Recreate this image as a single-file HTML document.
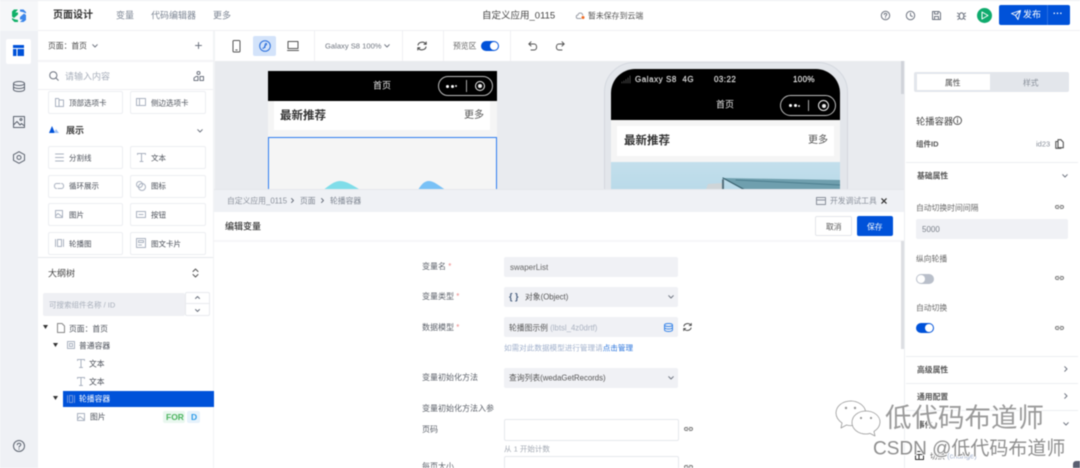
<!DOCTYPE html>
<html lang="zh"><head><meta charset="utf-8"><title>页面设计</title>
<style>
html,body{margin:0;padding:0;width:1080px;height:468px;overflow:hidden;background:#fff}
#r{position:relative;width:1080px;height:468px;overflow:hidden;background:#fff;font-family:"Liberation Sans","Noto Sans CJK SC",sans-serif;font-size:9px;color:#4a4f58;filter:blur(.45px)}
.t{position:absolute;white-space:nowrap;transform:translateY(calc(-50% + 1px));line-height:1.2}
.b{position:absolute;box-sizing:border-box}
svg{position:absolute;overflow:visible;fill:none;stroke-linecap:round;stroke-linejoin:round}
.card{position:absolute;box-sizing:border-box;width:75px;height:23px;border:1px solid #eceef2;border-radius:2px;background:#fff}
.g{color:#7d8694}
.lab{color:#5b6069;font-size:8px}
.sel{position:absolute;box-sizing:border-box;left:504px;width:174px;height:20px;background:#f0f1f5;border-radius:2px}
.s1{stroke:#6e7480;stroke-width:1}
.s2{stroke:#aab2c0;stroke-width:1}
</style></head><body><div id="r">

<!-- top bar -->
<div class="b" style="left:0;top:0;width:1080px;height:1px;background:#eceef1"></div>
<div class="b" style="left:38px;top:30px;width:1042px;height:1px;background:#eff0f3"></div>

<!-- left rail -->
<div class="b" style="left:0;top:1px;width:38px;height:467px;background:#eff1f5"></div>
<div class="b" style="left:0;top:1px;width:38px;height:30px;background:#f6f7f9"></div>
<svg style="left:11px;top:9px" width="16" height="14" viewBox="0 0 16 14"><path d="M7 .5H3L1 2.500v5l2 1.500 4-3.500V3.500H4.500L3.500 4.500M1 9l2 1 1.500.5 2.500.5V13H3.500L1 10.500z" fill="#10b068"/><path d="M9 13h3.500L15 11V6l-2-1.500-4 3.500v2.500h2.500l1-1M15 4.500l-2-1-1.500-.5L9 2.500V.5h3.500L15 3z" fill="#3b86ea"/></svg>
<div class="b" style="left:6px;top:39px;width:25px;height:25px;background:#fff;border-radius:2px"></div>
<svg style="left:13px;top:45px" width="11" height="11" viewBox="0 0 11 11"><path d="M0 0h11v3H0zM0 4h3.500v7H0zM4.500 4H11v7H4.500z" fill="#0052d9"/></svg>
<svg style="left:13px;top:81px" width="12" height="11" viewBox="0 0 12 11" stroke="#5d6470"><ellipse cx="6" cy="2.500" rx="5.500" ry="2"/><path d="M.5 2.500v6c0 1.100 2.500 2 5.500 2s5.500-.9 5.500-2v-6M.5 5.500c0 1.100 2.500 2 5.500 2s5.500-.9 5.500-2"/></svg>
<svg style="left:13px;top:116px" width="12" height="12" viewBox="0 0 12 12" stroke="#5d6470"><rect x=".5" y=".5" width="11" height="11"/><circle cx="8" cy="3.500" r="1"/><path d="M.5 9L4 5.500l3 3.500 1.500-1.500 3 2.500"/></svg>
<svg style="left:13px;top:151px" width="12" height="13" viewBox="0 0 12 13" stroke="#5d6470"><path d="M6 .7l5.500 3v5.600L6 12.300.5 9.300V3.700z"/><circle cx="6" cy="6.500" r="2"/></svg>
<svg style="left:13px;top:440px" width="12" height="12" viewBox="0 0 12 12" stroke="#5d6470"><circle cx="6" cy="6" r="5.500"/><path d="M4.300 4.700C4.300 2.800 7.800 2.800 7.800 4.700 7.800 6 6 5.900 6 7.300M6 8.900v.3"/></svg>

<!-- top bar text -->
<span class="t" style="left:53px;top:15px;font-size:10px;font-weight:700;color:#333">页面设计</span>
<span class="t g" style="left:116px;top:15px">变量</span>
<span class="t g" style="left:151px;top:15px">代码编辑器</span>
<span class="t g" style="left:213px;top:15px">更多</span>
<span class="t" style="left:482px;top:15px;color:#444;font-size:9.500px">自定义应用_0115</span>
<svg style="left:576px;top:12px" width="9" height="7" viewBox="0 0 9 7"><path d="M2 6.500C-.3 6.500-.3 3 2 3 2.500.5 6 .3 6.700 3" stroke="#9a9fa8"/><path d="M2 6.500h3" stroke="#9a9fa8"/><circle cx="7" cy="5.500" r="1.500" fill="#f06a22"/></svg>
<span class="t" style="left:588px;top:15px;font-size:7.900px;color:#555">暂未保存到云端</span>

<svg style="left:881px;top:11px" width="9" height="9" viewBox="0 0 9 9" class="s1"><circle cx="4.500" cy="4.500" r="4.200"/><path d="M3.200 3.500c0-1.500 2.600-1.500 2.600 0 0 1-1.300 1-1.300 2M4.500 6.800v.1"/></svg>
<svg style="left:906px;top:11px" width="9" height="9" viewBox="0 0 9 9" class="s1"><circle cx="4.500" cy="4.500" r="4.200"/><path d="M4.500 2.200v2.500l1.800.8"/></svg>
<svg style="left:932px;top:11px" width="9" height="9" viewBox="0 0 9 9" class="s1"><path d="M.5.500h6.500l1.500 1.500v6.500h-8zM2.500.5v2.500h3.500V.5M2.500 8.500V5.500h4v3"/></svg>
<svg style="left:957px;top:11px" width="9" height="9" viewBox="0 0 9 9" class="s1"><ellipse cx="4.500" cy="5" rx="2.300" ry="3.300"/><path d="M.5 2l2 1.500M8.500 2l-2 1.500M.3 5.300h1.900M8.700 5.300H6.800M.8 8.500l1.800-1.500M8.200 8.500L6.400 7"/></svg>
<div class="b" style="left:977px;top:8px;width:15px;height:15px;border-radius:50%;background:#0fab6d"></div>
<svg style="left:981px;top:11px" width="8" height="9" viewBox="0 0 8 9"><path d="M1 1l6 3.500L1 8z" stroke="#fff"/></svg>
<div class="b" style="left:999px;top:5px;width:71px;height:20px;border-radius:2px;background:#0052d9"></div>
<div class="b" style="left:1047px;top:5px;width:1px;height:20px;background:#2b6fe0"></div>
<svg style="left:1011px;top:10px" width="10" height="10" viewBox="0 0 10 10"><path d="M.5 3.500L9.500.5 7 9.500 4.500 5.500zM4.500 5.500L9.500.5" stroke="#fff" stroke-width=".9"/></svg>
<span class="t" style="left:1023px;top:14px;color:#fff;font-size:9px">发布</span>
<span class="t" style="left:1053px;top:13px;color:#fff;font-size:9px;font-weight:700;letter-spacing:.3px">···</span>

<!-- left panel -->
<div class="b" style="left:213px;top:31px;width:2px;height:437px;background:#f2f3f5"></div>
<span class="t" style="left:48px;top:44.500px;font-size:7.800px;color:#444">页面：首页</span>
<svg style="left:92px;top:44px" width="6" height="4" viewBox="0 0 6 4" class="s1"><path d="M.7.700L3 3 5.300.7"/></svg>
<svg style="left:195px;top:42px" width="7" height="7" viewBox="0 0 7 7" class="s1"><path d="M3.500.5v6M.5 3.500h6"/></svg>
<div class="b" style="left:38px;top:60px;width:175px;height:2px;background:#f3f4f6"></div>
<svg style="left:49px;top:71px" width="10" height="10" viewBox="0 0 10 10" class="s1"><circle cx="4.300" cy="4.300" r="3.600"/><path d="M7 7l2.300 2.300"/></svg>
<span class="t" style="left:65px;top:75.500px;color:#a7aeba;font-size:9px">请输入内容</span>
<svg style="left:193px;top:71px" width="11" height="10" viewBox="0 0 11 10" class="s1"><circle cx="5.500" cy="2" r="1.500"/><path d="M1 9.500V7l2-1.500h2V9.500zM7 5.500h3.500v4H7z"/></svg>
<div class="b" style="left:38px;top:89px;width:175px;height:1px;background:#eff0f3"></div>

<div class="card" style="left:48px;top:91px"></div><div class="card" style="left:130px;top:91px;width:76px"></div>
<svg style="left:55px;top:98px" width="9" height="9" viewBox="0 0 9 9" class="s2"><path d="M.5.500h3l1 1.500h4v6.500h-8zM4 2v6.500"/></svg>
<span class="t" style="left:69px;top:102px;font-size:7.500px">顶部选项卡</span>
<svg style="left:136px;top:98px" width="10" height="8" viewBox="0 0 10 8" class="s2"><rect x=".5" y=".5" width="9" height="7"/><path d="M3.500.5v7"/></svg>
<span class="t" style="left:151px;top:102px;font-size:7.500px">侧边选项卡</span>

<svg style="left:49px;top:126px" width="10" height="8" viewBox="0 0 10 8"><path d="M3 0l3 7H0z" fill="#0052d9"/><path d="M7 3l3 4H5z" fill="#9cc0f5"/></svg>
<span class="t" style="left:66px;top:130px;font-size:9px;font-weight:700;color:#444">展示</span>
<svg style="left:197px;top:129px" width="6" height="4" viewBox="0 0 6 4" class="s1"><path d="M.7.700L3 3 5.300.7"/></svg>

<div class="card" style="left:48px;top:146px"></div><div class="card" style="left:130px;top:146px;width:76px"></div>
<svg style="left:55px;top:153px" width="9" height="9" viewBox="0 0 9 9" class="s2"><path d="M.5 1h8M.5 4.500h8M.5 8h8"/></svg>
<span class="t" style="left:69px;top:157px;font-size:7.500px">分割线</span>
<svg style="left:137px;top:153px" width="9" height="9" viewBox="0 0 9 9" class="s2"><path d="M.5 1.500V.5h8v1M4.500.5v8M3 8.500h3"/></svg>
<span class="t" style="left:151px;top:157px;font-size:7.500px">文本</span>

<div class="card" style="left:48px;top:175px"></div><div class="card" style="left:130px;top:175px;width:76px"></div>
<svg style="left:54px;top:182px" width="10" height="8" viewBox="0 0 10 8" class="s2"><path d="M2.500 6.500C-.3 6.500-.3 1.500 2.500 1.500H6M7.500 1.500c2.800 0 2.800 5 0 5H4"/></svg>
<span class="t" style="left:69px;top:185px;font-size:7.500px">循环展示</span>
<svg style="left:136px;top:181px" width="10" height="10" viewBox="0 0 10 10" class="s2"><circle cx="3.500" cy="3.500" r="3"/><circle cx="6" cy="6" r="3.500"/></svg>
<span class="t" style="left:151px;top:185px;font-size:7.500px">图标</span>

<div class="card" style="left:48px;top:203px"></div><div class="card" style="left:130px;top:203px;width:76px"></div>
<svg style="left:55px;top:210px" width="8" height="8" viewBox="0 0 8 8" class="s2"><rect x=".5" y=".5" width="7" height="7"/><path d="M.5 6l2.500-2.500L7.500 7"/></svg>
<span class="t" style="left:69px;top:214px;font-size:7.500px">图片</span>
<svg style="left:136px;top:211px" width="10" height="7" viewBox="0 0 10 7" class="s2"><rect x=".5" y=".5" width="9" height="6"/><path d="M3 3.500h4"/></svg>
<span class="t" style="left:151px;top:214px;font-size:7.500px">按钮</span>

<div class="card" style="left:48px;top:232px"></div><div class="card" style="left:130px;top:232px;width:76px"></div>
<svg style="left:55px;top:239px" width="9" height="8" viewBox="0 0 9 8" class="s2"><path d="M.5.500v7M8.500.5v7M2.500.5h4v7h-4z"/></svg>
<span class="t" style="left:69px;top:242.500px;font-size:7.500px">轮播图</span>
<svg style="left:136px;top:238px" width="10" height="10" viewBox="0 0 10 10" class="s2"><rect x=".5" y=".5" width="9" height="9"/><path d="M2.500 2.500h5v2h-5zM2.500 7h3"/></svg>
<span class="t" style="left:151px;top:242.500px;font-size:7.500px">图文卡片</span>

<div class="b" style="left:38px;top:257px;width:175px;height:1px;background:#e6e8ec"></div>
<span class="t" style="left:48px;top:272.500px;font-size:9px;color:#444">大纲树</span>
<svg style="left:192px;top:268px" width="7" height="10" viewBox="0 0 7 10" stroke="#555"><path d="M1 3.500L3.500 1 6 3.500M1 6.500L3.500 9 6 6.500"/></svg>

<div class="b" style="left:43px;top:293px;width:142px;height:23px;background:#eff0f4;border-radius:2px"></div>
<span class="t" style="left:49px;top:303.500px;font-size:7.500px;color:#a7aeba">可搜索组件名称 / ID</span>
<div class="b" style="left:185px;top:292px;width:25px;height:24px;border:1px solid #e8eaee;border-radius:2px;background:#fff"></div>
<div class="b" style="left:185px;top:303px;width:25px;height:1px;background:#e8eaee"></div>
<svg style="left:195px;top:296px" width="5" height="3" viewBox="0 0 5 3" class="s1"><path d="M.5 2.500L2.500.5l2 2"/></svg>
<svg style="left:195px;top:309px" width="5" height="3" viewBox="0 0 5 3" class="s1"><path d="M.5.5l2 2 2-2"/></svg>

<!-- tree -->
<svg style="left:43px;top:325px" width="5" height="4" viewBox="0 0 5 4"><path d="M0 0h5L2.500 4z" fill="#333"/></svg>
<svg style="left:57px;top:323px" width="8" height="10" viewBox="0 0 8 10" stroke="#888"><path d="M.5.500h4.500l2.500 2.500v6.500h-7z"/></svg>
<span class="t" style="left:69px;top:327.500px;font-size:7.800px">页面：首页</span>
<svg style="left:53px;top:343px" width="5" height="4" viewBox="0 0 5 4"><path d="M0 0h5L2.500 4z" fill="#333"/></svg>
<svg style="left:67px;top:341px" width="8" height="8" viewBox="0 0 8 8" class="s2"><rect x=".5" y=".5" width="7" height="7"/><rect x="2.500" y="2.500" width="3" height="3"/></svg>
<span class="t" style="left:79px;top:344.500px;font-size:7.800px">普通容器</span>
<svg style="left:77px;top:359px" width="8" height="9" viewBox="0 0 8 9" class="s2"><path d="M.5 1.500V.5h7v1M4 .5v8M2.500 8.500h3"/></svg>
<span class="t" style="left:89px;top:362.500px;font-size:7.800px">文本</span>
<svg style="left:77px;top:377px" width="8" height="9" viewBox="0 0 8 9" class="s2"><path d="M.5 1.500V.5h7v1M4 .5v8M2.500 8.500h3"/></svg>
<span class="t" style="left:89px;top:380.500px;font-size:7.800px">文本</span>
<svg style="left:53px;top:396px" width="5" height="4" viewBox="0 0 5 4"><path d="M0 0h5L2.500 4z" fill="#333"/></svg>
<div class="b" style="left:63px;top:391px;width:151px;height:16px;background:#0052d9"></div>
<svg style="left:67px;top:395px" width="8" height="8" viewBox="0 0 8 8" stroke="#6f96e0"><path d="M.5.500v7M7.500.5v7M2.500.5h3v7h-3z"/></svg>
<span class="t" style="left:79px;top:398px;font-size:7.800px;color:#fff">轮播容器</span>
<svg style="left:77px;top:413px" width="8" height="8" viewBox="0 0 8 8" class="s2"><rect x=".5" y=".5" width="7" height="7"/><path d="M.5 6l2.500-2.500L7.500 7"/></svg>
<span class="t" style="left:90px;top:416px;font-size:7.800px">图片</span>
<div class="b" style="left:163px;top:411px;width:22px;height:12px;border-radius:2px;background:#e9f7ef"></div>
<span class="t" style="left:166px;top:416px;font-size:8.500px;font-weight:700;color:#4cb45f">FOR</span>
<div class="b" style="left:187px;top:411px;width:13px;height:12px;border-radius:2px;background:#e6f2fb"></div>
<span class="t" style="left:191px;top:416px;font-size:8.500px;font-weight:700;color:#2c9be8">D</span>

<!-- toolbar -->
<svg style="left:232px;top:40px" width="10" height="13" viewBox="0 0 10 13" stroke="#555"><rect x="1" y=".5" width="7" height="11.500" rx="1"/><path d="M3.800 10h1.400"/></svg>
<div class="b" style="left:253px;top:36px;width:23px;height:20px;background:#d3e3fa;border-radius:2px"></div>
<svg style="left:259px;top:40px" width="12" height="12" viewBox="0 0 12 12" stroke="#2a6fdc"><circle cx="6" cy="6" r="5.300"/><path d="M6.500 3.500C8 2.800 7.900 5 6.500 5.300 5.300 5.600 5.700 8.700 3.800 8.300M6 4.500v3"/></svg>
<svg style="left:287px;top:41px" width="12" height="10" viewBox="0 0 12 10" stroke="#555"><rect x="1" y=".5" width="10" height="7"/><path d="M.5 9.500h11"/></svg>
<div class="b" style="left:314px;top:31px;width:1px;height:30px;background:#eff0f3"></div>
<span class="t" style="left:325px;top:45px;font-size:7.600px;color:#707680">Galaxy S8 100%</span>
<svg style="left:384px;top:44px" width="6" height="4" viewBox="0 0 6 4" class="s1"><path d="M.7.700L3 3 5.300.7"/></svg>
<div class="b" style="left:402px;top:31px;width:1px;height:30px;background:#eff0f3"></div>
<svg style="left:417px;top:41px" width="10" height="10" viewBox="0 0 10 10" stroke="#444"><path d="M1 4C1.700 1 7 0 8.700 3M9 6c-.7 3-6 4-7.700 1"/><path d="M7 3.300h2.200V1M3 6.700H.8V9"/></svg>
<div class="b" style="left:443px;top:31px;width:1px;height:30px;background:#eff0f3"></div>
<span class="t" style="left:453px;top:45px;font-size:7.800px;color:#666">预览区</span>
<div class="b" style="left:481px;top:41px;width:18px;height:10px;border-radius:5px;background:#0052d9"></div>
<div class="b" style="left:490px;top:42px;width:8px;height:8px;border-radius:50%;background:#fff"></div>
<div class="b" style="left:510px;top:31px;width:1px;height:30px;background:#eff0f3"></div>
<svg style="left:528px;top:41px" width="10" height="10" viewBox="0 0 10 10" stroke="#555"><path d="M3 .8L.8 3 3 5M1 3h5c3.500 0 3.500 6 0 6H3"/></svg>
<svg style="left:555px;top:41px" width="10" height="10" viewBox="0 0 10 10" stroke="#555"><path d="M7 .8L9.200 3 7 5M9 3H4C.5 3 .5 9 4 9h3"/></svg>

<!-- canvas -->
<div class="b" style="left:215px;top:61px;width:689px;height:129px;background:#e9ebef"></div>

<!-- left phone -->
<div class="b" style="left:268px;top:71px;width:229px;height:120px;background:#f5f5f5"></div>
<div class="b" style="left:268px;top:71px;width:229px;height:30px;background:#000"></div>
<span class="t" style="left:373px;top:85px;font-size:9px;color:#e8e8e8">首页</span>
<div class="b" style="left:438px;top:76px;width:55px;height:20px;border:1px solid #bdbdbd;border-radius:10px"></div>
<span class="b" style="left:446px;top:84.500px;width:3px;height:3px;border-radius:50%;background:#fff"></span>
<span class="b" style="left:451px;top:84.500px;width:3px;height:3px;border-radius:50%;background:#fff"></span>
<span class="b" style="left:455px;top:85px;width:2px;height:2px;border-radius:50%;background:#ddd"></span>
<div class="b" style="left:466px;top:80px;width:1px;height:12px;background:#aaa"></div>
<div class="b" style="left:475px;top:81px;width:10px;height:10px;border:1px solid #eee;border-radius:50%"></div>
<div class="b" style="left:478px;top:84px;width:4px;height:4px;border-radius:50%;background:#eee"></div>
<div class="b" style="left:274px;top:101px;width:216px;height:29px;background:#fff"></div>
<span class="t" style="left:280px;top:116px;font-size:11.500px;font-weight:700;color:#333">最新推荐</span>
<span class="t" style="left:464px;top:114.500px;font-size:10px;color:#555">更多</span>
<div class="b" style="left:268px;top:137px;width:229px;height:60px;border:1.500px solid #2c7cf0;background:#f5f5f5"></div>
<svg style="left:269px;top:175px" width="228" height="15" viewBox="0 0 228 15"><path d="M54 15C60 11 65 6 71 6 78 6 84 11 92 15z" fill="#7fdde9"/><path d="M149 15C152 10 155 6 160 6 165 6 170 11 177 15z" fill="#79c1f6"/></svg>

<!-- right phone -->
<div class="b" style="left:604px;top:62px;width:244px;height:140px;background:#e3e6eb;border:1px solid #d4d8df;border-radius:30px 30px 0 0"></div>
<div class="b" style="left:611px;top:69px;width:229px;height:130px;background:#f5f5f5;border-radius:24px 24px 0 0;overflow:hidden">
  <div class="b" style="left:0;top:0;width:229px;height:51px;background:#000"></div>
  <div class="b" style="left:6px;top:57px;width:217px;height:30px;background:#fff"></div>
  <div class="b" style="left:0;top:93px;width:229px;height:40px;background:linear-gradient(#c3dfec,#b5d8e8)"></div>
  <svg style="left:0;top:93px" width="229" height="30" viewBox="0 0 229 30"><path d="M94 30L97 22 112 21V30z" fill="#cfd5d8"/><path d="M112 16L229 18V27L185 29 134 28z" fill="#6f9fae"/><path d="M112 16L134 28H229" stroke="#38606e" stroke-width="1.200"/><path d="M125 18L229 23" stroke="#4d7f8f"/><path d="M112 18V28" stroke="#55707c" stroke-width="2"/></svg>
</div>
<svg style="left:621px;top:75px" width="10" height="8" viewBox="0 0 10 8"><path d="M1 7v1M3 6v2M5 4.500V8M7 3v5M9 1v7" stroke="#444"/></svg>
<span class="t" style="left:635px;top:78.500px;font-size:8px;color:#e4e4e4;letter-spacing:.55px;-webkit-text-stroke:.15px #e4e4e4">Galaxy S8&nbsp; 4G</span>
<span class="t" style="left:714px;top:78.500px;font-size:8px;color:#e4e4e4;letter-spacing:.45px;-webkit-text-stroke:.15px #e4e4e4">03:22</span>
<span class="t" style="left:793px;top:78.500px;font-size:8px;color:#eee;letter-spacing:.35px;-webkit-text-stroke:.15px #eee">100%</span>
<span class="t" style="left:716px;top:104px;font-size:9px;color:#e8e8e8">首页</span>
<div class="b" style="left:780px;top:95px;width:56px;height:21px;border:1px solid #bdbdbd;border-radius:11px"></div>
<span class="b" style="left:789px;top:104px;width:3px;height:3px;border-radius:50%;background:#fff"></span>
<span class="b" style="left:794px;top:104px;width:3px;height:3px;border-radius:50%;background:#fff"></span>
<span class="b" style="left:798px;top:104.500px;width:2px;height:2px;border-radius:50%;background:#ddd"></span>
<div class="b" style="left:808px;top:100px;width:1px;height:11px;background:#aaa"></div>
<div class="b" style="left:818px;top:100px;width:11px;height:11px;border:1px solid #eee;border-radius:50%"></div>
<div class="b" style="left:821.500px;top:103.500px;width:4px;height:4px;border-radius:50%;background:#eee"></div>
<span class="t" style="left:624px;top:141px;font-size:11.500px;font-weight:700;color:#333">最新推荐</span>
<span class="t" style="left:808px;top:139.500px;font-size:10px;color:#555">更多</span>

<!-- bottom panel -->
<div class="b" style="left:214px;top:189px;width:690px;height:23px;background:#eff1f5;border-top:1px solid #e6e8ec"></div>
<div class="b" style="left:214px;top:212px;width:690px;height:256px;background:#fff"></div>
<div class="b" style="left:214px;top:240px;width:690px;height:2px;background:#f6f6f8"></div>
<span class="t" style="left:227px;top:199.500px;font-size:7.800px;color:#8a909b">自定义应用_0115</span>
<svg style="left:291px;top:198px" width="3" height="5" viewBox="0 0 3 5" class="s1"><path d="M.5.500l2 2-2 2"/></svg>
<span class="t" style="left:300px;top:199.500px;font-size:7.800px;color:#7d8490">页面</span>
<svg style="left:321px;top:198px" width="3" height="5" viewBox="0 0 3 5" class="s1"><path d="M.5.500l2 2-2 2"/></svg>
<span class="t" style="left:330px;top:199.500px;font-size:7.800px;color:#7d8490">轮播容器</span>
<svg style="left:816px;top:197px" width="10" height="8" viewBox="0 0 10 8" stroke="#8a909b"><rect x=".5" y=".5" width="9" height="7"/><path d="M.5 3h9"/></svg>
<span class="t" style="left:830px;top:199.500px;font-size:7.800px;color:#8a909b">开发调试工具</span>
<svg style="left:881px;top:198px" width="6" height="6" viewBox="0 0 6 6" stroke="#333" stroke-width="1.200"><path d="M.8.800l4.400 4.400M5.200.8L.8 5.200"/></svg>

<span class="t" style="left:225px;top:225.500px;font-size:9px;color:#333;font-weight:500">编辑变量</span>
<div class="b" style="left:815px;top:216px;width:37px;height:20px;border:1px solid #e4e6ea;border-radius:2px;background:#fff"></div>
<span class="t" style="left:826px;top:225.500px;font-size:7.800px;color:#555">取消</span>
<div class="b" style="left:857px;top:216px;width:36px;height:20px;border-radius:2px;background:#0052d9"></div>
<span class="t" style="left:867px;top:225.500px;font-size:7.800px;color:#fff">保存</span>

<!-- form -->
<span class="t lab" style="left:422px;top:265.500px">变量名 <span style="color:#e88">*</span></span>
<div class="sel" style="top:257px"></div>
<span class="t" style="left:510px;top:266.500px;font-size:8px;color:#666">swaperList</span>
<span class="t lab" style="left:422px;top:296px">变量类型 <span style="color:#e88">*</span></span>
<div class="sel" style="top:287px"></div>
<span class="t" style="left:509px;top:295.500px;font-size:9px;font-weight:700;color:#4a6080">{ }</span>
<span class="t" style="left:525px;top:296px;font-size:7.800px;color:#555">对象(Object)</span>
<svg style="left:668px;top:295px" width="6" height="4" viewBox="0 0 6 4" class="s1"><path d="M.7.700L3 3 5.300.7"/></svg>
<span class="t lab" style="left:422px;top:326.500px">数据模型 <span style="color:#e88">*</span></span>
<div class="sel" style="top:317px"></div>
<span class="t" style="left:509px;top:326.500px;font-size:7.800px;color:#555">轮播图示例 <span style="color:#aab2c0">(lbtsl_4z0drtf)</span></span>
<svg style="left:664px;top:323px" width="9" height="9" viewBox="0 0 9 9" stroke="#3a86e8"><ellipse cx="4.500" cy="2" rx="4" ry="1.500"/><path d="M.5 2v5c0 .8 1.800 1.500 4 1.500s4-.7 4-1.500V2M.5 4.500c0 .8 1.800 1.500 4 1.500s4-.7 4-1.500"/></svg>
<svg style="left:683px;top:322px" width="9" height="10" viewBox="0 0 10 10" stroke="#444"><path d="M1 4C1.700 1 7 0 8.700 3M9 6c-.7 3-6 4-7.700 1"/><path d="M7 3.300h2.200V1M3 6.700H.8V9"/></svg>
<span class="t" style="left:504px;top:346.500px;font-size:7.600px;color:#a0b0cc">如需对此数据模型进行管理请<span style="color:#2a74dc">点击管理</span></span>
<span class="t lab" style="left:422px;top:377px">变量初始化方法</span>
<div class="sel" style="top:368px"></div>
<span class="t" style="left:509px;top:377px;font-size:7.800px;color:#555">查询列表(wedaGetRecords)</span>
<svg style="left:668px;top:376px" width="6" height="4" viewBox="0 0 6 4" class="s1"><path d="M.7.700L3 3 5.300.7"/></svg>
<span class="t lab" style="left:422px;top:407.500px">变量初始化方法入参</span>
<span class="t lab" style="left:422px;top:428.500px">页码</span>
<div class="b" style="left:504px;top:419px;width:175px;height:22px;border:1px solid #e6e8ec;border-radius:2px;background:#fff"></div>
<svg style="left:684px;top:427px" width="9" height="4" viewBox="0 0 9 4" stroke="#777"><path d="M3.500.5H2a1.500 1.500 0 000 3h1.500M5.500.5H7a1.500 1.500 0 010 3H5.500M3 2h3"/></svg>
<span class="t" style="left:504px;top:447.500px;font-size:7.500px;color:#a3a9b3">从 1 开始计数</span>
<span class="t lab" style="left:422px;top:465.500px">每页大小</span>
<div class="b" style="left:504px;top:456px;width:175px;height:22px;border:1px solid #e6e8ec;border-radius:2px;background:#fff"></div>
<svg style="left:684px;top:465px" width="9" height="4" viewBox="0 0 9 4" stroke="#777"><path d="M3.500.5H2a1.500 1.500 0 000 3h1.500M5.500.5H7a1.500 1.500 0 010 3H5.500M3 2h3"/></svg>

<!-- scrollbars -->
<div class="b" style="left:901px;top:61px;width:3px;height:33px;background:#d0d3d9"></div>
<div class="b" style="left:901px;top:241px;width:3px;height:108px;background:#dcdee2"></div>

<!-- right panel -->
<div class="b" style="left:904px;top:61px;width:176px;height:407px;background:#fff;border-left:1px solid #eceef1"></div>
<div class="b" style="left:914px;top:72px;width:155px;height:20px;background:#e3e6eb;border-radius:2px"></div>
<div class="b" style="left:917px;top:74px;width:73px;height:16px;background:#fff"></div>
<span class="t" style="left:945px;top:81.500px;font-size:7.800px;color:#444">属性</span>
<span class="t" style="left:1023px;top:81.500px;font-size:7.800px;color:#868d98">样式</span>
<span class="t" style="left:916px;top:120.500px;font-size:9.300px;color:#444">轮播容器</span>
<svg style="left:953px;top:116px" width="9" height="9" viewBox="0 0 9 9" stroke="#555"><circle cx="4.500" cy="4.500" r="4"/><path d="M4.500 4v2.800M4.500 2.300v.2"/></svg>
<span class="t" style="left:916px;top:142.500px;font-size:7.500px;font-weight:700;color:#555">组件ID</span>
<span class="t" style="left:1036px;top:142.500px;font-size:7.500px;color:#8a909b">id23</span>
<svg style="left:1055px;top:139px" width="9" height="10" viewBox="0 0 9 10" stroke="#555" stroke-width="1.100"><path d="M3 .7h3l2.300 2.500v5.500H3zM3 2.500H.8v6.800H6"/></svg>
<div class="b" style="left:906px;top:162px;width:172px;height:1px;background:#eceef1"></div>
<span class="t" style="left:917px;top:175px;font-size:7.800px;font-weight:700;color:#555">基础属性</span>
<svg style="left:1062px;top:174px" width="6" height="4" viewBox="0 0 6 4" class="s1"><path d="M.7.700L3 3 5.300.7"/></svg>
<span class="t" style="left:916px;top:207px;font-size:7.800px;color:#666">自动切换时间间隔</span>
<svg style="left:1055px;top:205px" width="9" height="4" viewBox="0 0 9 4" stroke="#777"><path d="M3.500.5H2a1.500 1.500 0 000 3h1.500M5.500.5H7a1.500 1.500 0 010 3H5.500M3 2h3"/></svg>
<div class="b" style="left:916px;top:219px;width:152px;height:20px;background:#f0f1f5;border-radius:2px"></div>
<span class="t" style="left:922px;top:228.500px;font-size:8px;color:#7a808a">5000</span>
<span class="t" style="left:916px;top:257.500px;font-size:7.800px;color:#666">纵向轮播</span>
<div class="b" style="left:916px;top:274px;width:18px;height:10px;border-radius:5px;background:#b9bfca"></div>
<div class="b" style="left:917px;top:275px;width:8px;height:8px;border-radius:50%;background:#fff"></div>
<svg style="left:1055px;top:276px" width="9" height="4" viewBox="0 0 9 4" stroke="#777"><path d="M3.500.5H2a1.500 1.500 0 000 3h1.500M5.500.5H7a1.500 1.500 0 010 3H5.500M3 2h3"/></svg>
<span class="t" style="left:916px;top:306.500px;font-size:7.800px;color:#666">自动切换</span>
<div class="b" style="left:916px;top:323px;width:18px;height:10px;border-radius:5px;background:#0052d9"></div>
<div class="b" style="left:925px;top:324px;width:8px;height:8px;border-radius:50%;background:#fff"></div>
<svg style="left:1055px;top:326px" width="9" height="4" viewBox="0 0 9 4" stroke="#777"><path d="M3.500.5H2a1.500 1.500 0 000 3h1.500M5.500.5H7a1.500 1.500 0 010 3H5.500M3 2h3"/></svg>
<div class="b" style="left:906px;top:356px;width:172px;height:1px;background:#eceef1"></div>
<span class="t" style="left:917px;top:369px;font-size:7.800px;font-weight:700;color:#555">高级属性</span>
<svg style="left:1064px;top:366px" width="4" height="6" viewBox="0 0 4 6" class="s1"><path d="M.7.700L3 3 .7 5.300"/></svg>
<div class="b" style="left:906px;top:383px;width:172px;height:1px;background:#eceef1"></div>
<span class="t" style="left:917px;top:396px;font-size:7.800px;font-weight:700;color:#555">通用配置</span>
<svg style="left:1064px;top:393px" width="4" height="6" viewBox="0 0 4 6" class="s1"><path d="M.7.700L3 3 .7 5.300"/></svg>
<div class="b" style="left:906px;top:410px;width:172px;height:1px;background:#eceef1"></div>
<span class="t" style="left:917px;top:423.500px;font-size:7.800px;font-weight:700;color:#555">事件</span>
<svg style="left:1063px;top:422px" width="6" height="4" viewBox="0 0 6 4" class="s1"><path d="M.7.700L3 3 5.300.7"/></svg>
<svg style="left:915px;top:451px" width="9" height="9" viewBox="0 0 9 9" stroke="#333"><rect x=".5" y=".5" width="8" height="8"/><path d="M.5 3.500h8M4 3.500v5"/></svg>
<span class="t" style="left:930px;top:454.500px;font-size:7.500px;color:#666">切换 <span style="color:#a0b0cc">(change)</span></span>
<div class="b" style="left:1073px;top:461px;width:7px;height:7px;background:#5a5f70;border-radius:3px 0 0 0"></div>

<!-- watermark -->
<svg style="left:835px;top:400px" width="46" height="36" viewBox="0 0 46 36"><path d="M16 1C7 1 1 6.500 1 13c0 4 2.500 7.500 6 10l-1 5 5.500-3c1.500.4 3 .6 4.500.6 1 0 1.500 0 2-.1" fill="#fff" fill-opacity=".7" stroke="#9a9a9a" stroke-width=".8"/><path d="M16 1c7 0 13.500 4.500 14.500 10" stroke="#9a9a9a" stroke-width=".8"/><path d="M31 11c-8 0-14 5-14 11.500S23 34 31 34c1.500 0 3-.2 4-.6l5 2.600-1-4.500c3.500-2.300 6-5.500 6-9.500C45 16 39 11 31 11z" fill="#fff" fill-opacity=".8" stroke="#9a9a9a" stroke-width=".8"/><circle cx="11" cy="8" r="1.200" fill="#999"/><circle cx="20" cy="8" r="1.200" fill="#999"/><circle cx="26" cy="18" r="1.100" fill="#999"/><circle cx="36" cy="18" r="1.100" fill="#999"/></svg>
<span class="t" style="left:885px;top:418px;font-size:26.500px;color:#9a9a9a;text-shadow:-1px 0 #fff,1px 0 #fff,0 -1px #fff,0 1px #fff">低代码布道师</span>
<span class="t" style="left:873px;top:449px;font-size:19px;color:#8f8f8f;text-shadow:-1px 0 #fff,1px 0 #fff,0 -1px #fff,0 1px #fff">CSDN @低代码布道师</span>

</div></body></html>
